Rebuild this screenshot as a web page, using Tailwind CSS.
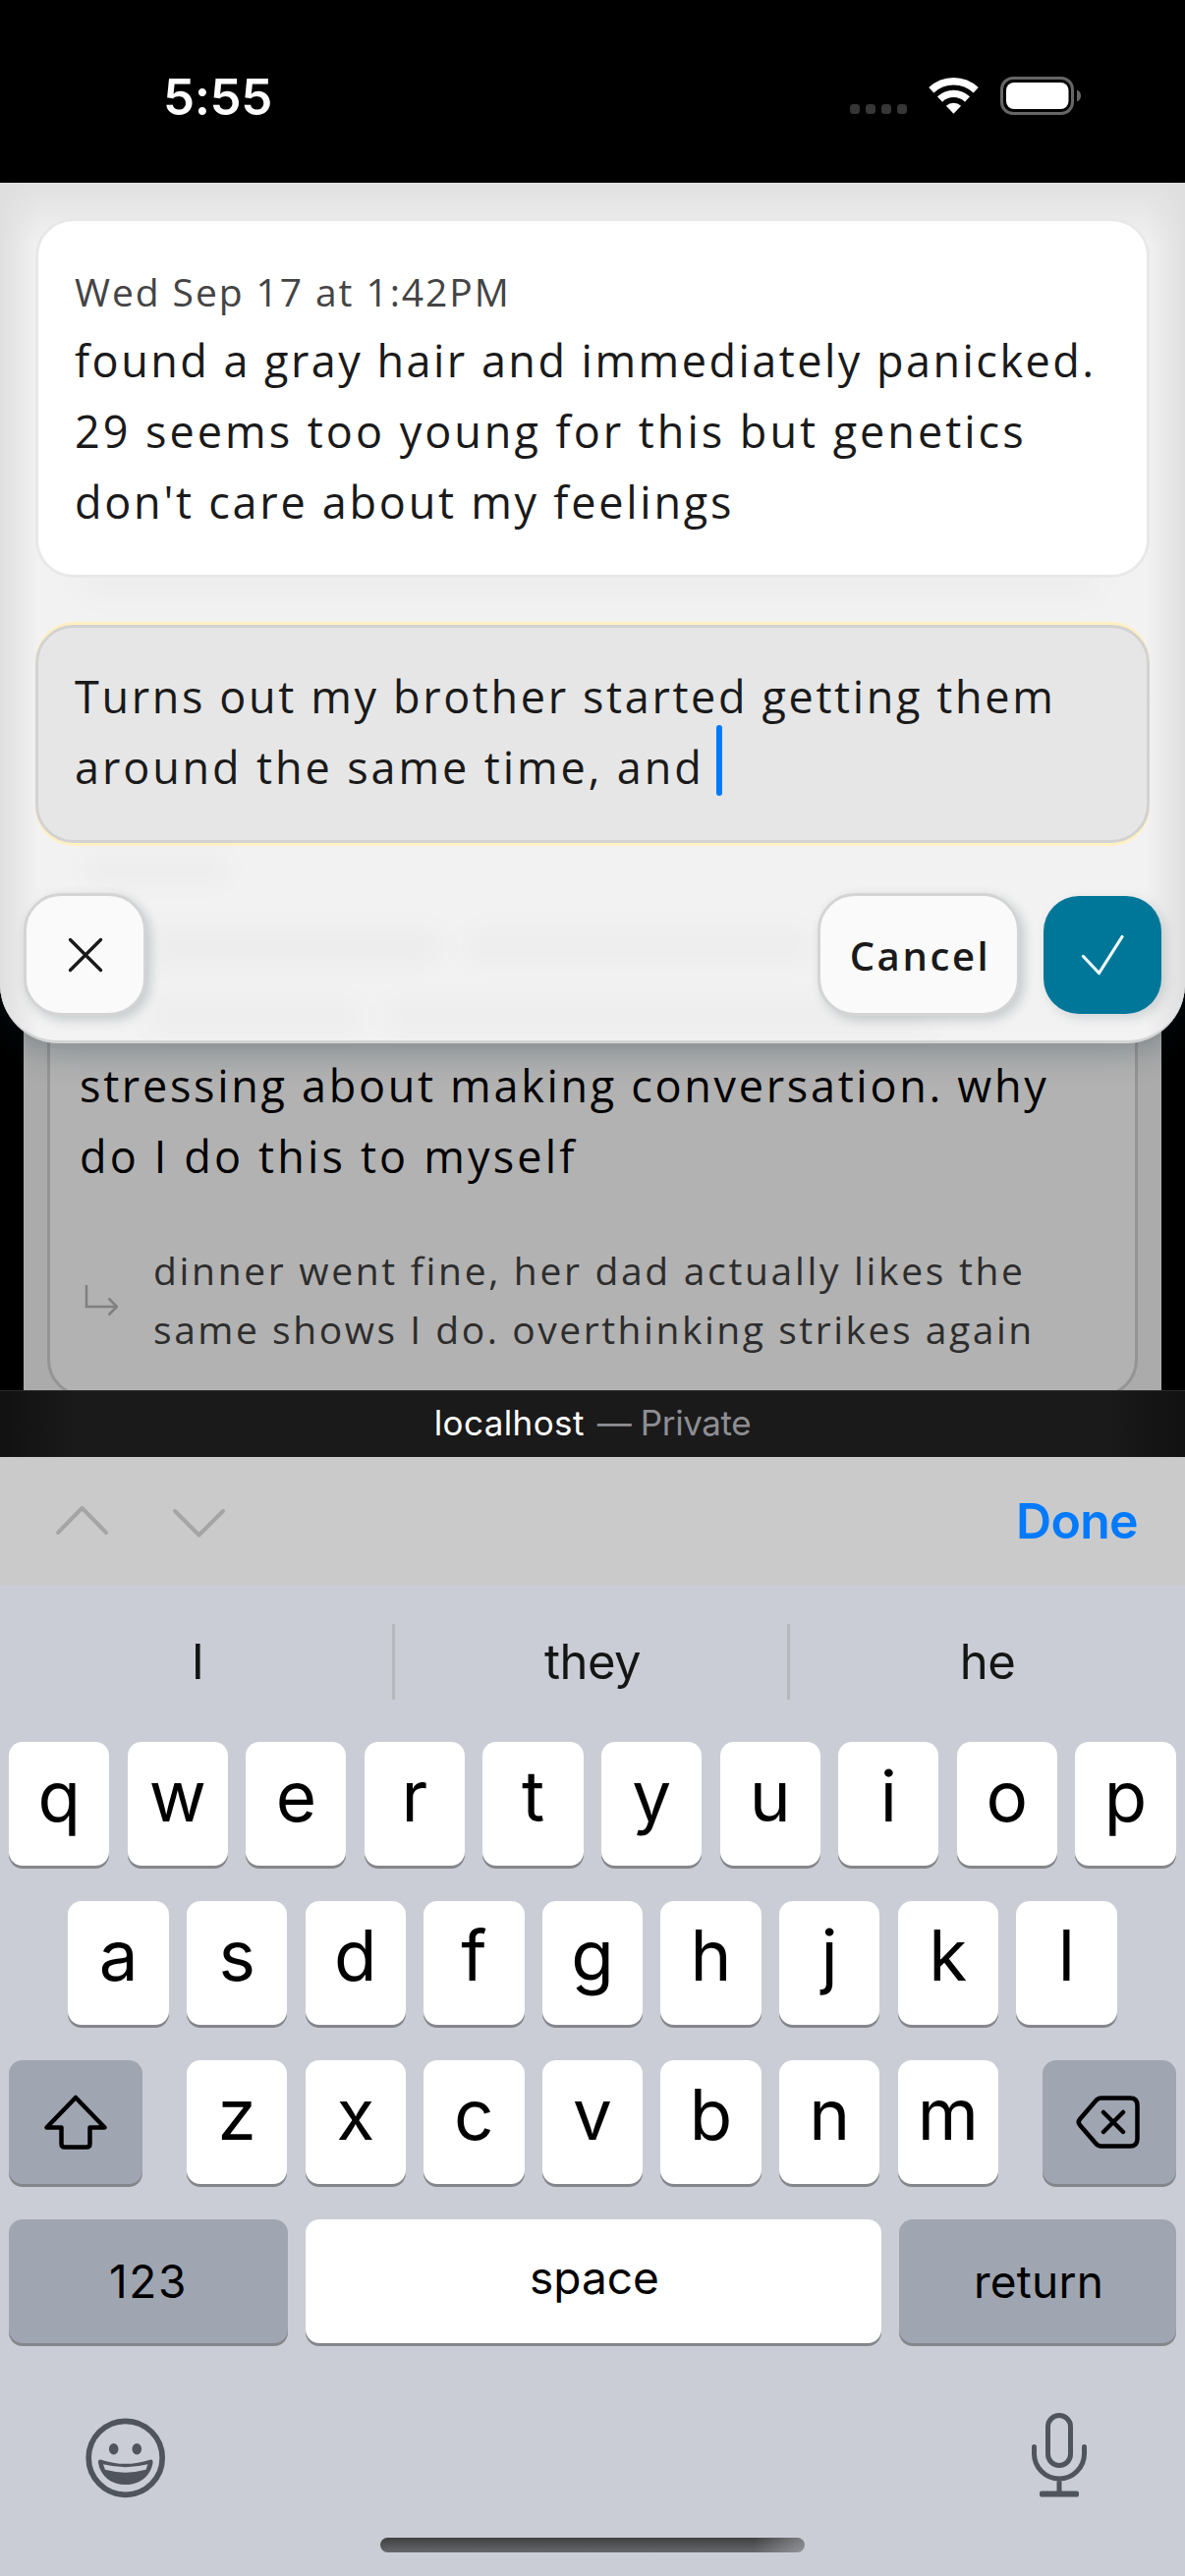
<!DOCTYPE html>
<html lang="en">
<head>
<meta charset="utf-8">
<title>Journal reply</title>
<script src="https://cdn.jsdelivr.net/npm/@tailwindcss/browser@4"></script>
</head>
<body class="w-[1206px] h-[2622px] overflow-hidden bg-black font-['Inter',sans-serif]">
<div class="flex h-[2622px] w-[1206px] flex-col">

  <!-- Status bar -->
  <header class="flex h-[186px] shrink-0 items-start justify-between pl-[166px] pr-[106px] pt-[68px] text-white">
    <div class="h-[62px] text-[51px] font-semibold leading-[62px] tracking-[-0.4px] whitespace-nowrap">5:55</div>
    <div class="flex h-[60px] items-center">
      <svg class="h-[40px] w-[236px]" viewBox="0 0 236 40" fill="none">
        <g fill="#363636"><rect x="1" y="28" width="10" height="10" rx="3.500"/><rect x="17" y="28" width="10" height="10" rx="3.500"/><rect x="33" y="28" width="10" height="10" rx="3.500"/><rect x="49" y="28" width="10" height="10" rx="3.500"/></g>
        <g stroke="#fff" stroke-width="7.400">
          <path d="M83.800 13.800A33 33 0 0 1 129.200 13.800"/>
          <path d="M92.500 23A20.300 20.300 0 0 1 120.500 23"/>
        </g>
        <path d="M106.500 37.700 98.900 29.700A11 11 0 0 1 114.100 29.700z" fill="#fff"/>
        <rect x="155.500" y="1.500" width="72" height="36" rx="11.500" stroke="#666" stroke-width="3"/>
        <rect x="160" y="6" width="63.500" height="27" rx="8" fill="#fff"/>
        <path d="M232 13.500c2.500 1 4 3.300 4 6s-1.500 5-4 6z" fill="#666"/>
      </svg>
    </div>
  </header>

  <!-- Page viewport -->
  <main class="relative h-[1229px] shrink-0 overflow-hidden bg-black font-['Open_Sans',sans-serif]">
    <div class="mx-6 h-full bg-[#ababab] px-6">
      <article class="h-[1236px] rounded-[38px] border-[3px] border-[#949494] bg-[#b2b2b2] pl-[30px] pt-[880px]">
        <p class="text-[45px] leading-[72px] text-black whitespace-nowrap"><span class="tracking-[2.69px]">stressing about making conversation. why</span><br><span class="tracking-[3.15px]">do I do this to myself</span></p>
        <div class="mt-[50px] flex">
          <svg class="mt-[44px] ml-px h-[36px] w-[38px] shrink-0" viewBox="0 0 38 36" fill="none" stroke="#808080" stroke-width="2.600"><path d="M6 1v22h32M28.500 14.500 37 23l-8.500 8.500"/></svg>
          <p class="ml-[36px] text-[39px] leading-[60px] text-[#2d2d2d] whitespace-nowrap"><span class="tracking-[2.68px]">dinner went fine, her dad actually likes the</span><br><span class="tracking-[2.54px]">same shows I do. overthinking strikes again</span></p>
        </div>
      </article>
    </div>

    <!-- Compose sheet -->
    <section class="absolute inset-x-0 top-0 flex h-[876px] flex-col rounded-b-[60px] border-b-[3px] border-[#d4d4d4] bg-[#f2f2f2] bg-[linear-gradient(to_right,#dfdfdf,#f2f2f200_40px,#f2f2f200_1166px,#dfdfdf),linear-gradient(to_bottom,#e0e0e0,#f2f2f200_64px)] shadow-[0_6px_36px_rgba(0,40,52,0.3)]">
      <div class="absolute left-[80px] top-[392px] h-[30px] w-[1040px] rounded-full bg-black/[0.018] blur-[14px]"></div>
      <div class="absolute left-[84px] top-[684px] h-[30px] w-[150px] rounded-full bg-black/[0.018] blur-[12px]"></div>
      <div class="absolute left-[150px] top-[760px] h-[36px] w-[300px] rounded-full bg-black/[0.022] blur-[14px]"></div>
      <div class="absolute left-[470px] top-[760px] h-[36px] w-[360px] rounded-full bg-black/[0.02] blur-[14px]"></div>
      <div class="absolute left-[150px] top-[832px] h-[34px] w-[220px] rounded-full bg-black/[0.02] blur-[14px]"></div>
      <div class="absolute left-[390px] top-[832px] h-[34px] w-[560px] rounded-full bg-black/[0.02] blur-[14px]"></div>

      <article class="relative mx-[36px] mt-[36px] h-[366px] rounded-[39px] border-[3px] border-[#e8e8e8] bg-white px-[37px] pt-[48px]">
        <p class="mb-[10px] text-[39px] leading-[48px] text-[#444] whitespace-nowrap"><span class="tracking-[1.92px]">Wed Sep 17 at 1:42PM</span></p>
        <p class="text-[45px] leading-[72px] text-[#1a1a1a] whitespace-nowrap"><span class="tracking-[2.47px]">found a gray hair and immediately panicked.</span><br><span class="tracking-[2.99px]">29 seems too young for this but genetics</span><br><span class="tracking-[2.74px]">don't care about my feelings</span></p>
      </article>

      <div class="relative mx-[36px] mt-[48px] h-[222px] rounded-[39px] border-[3px] border-[#d2d2d2] bg-[#e6e6e6] px-[37px] pt-[34px] shadow-[0_3px_0_#fff0c2,0_-3px_0_#fff0c2]">
        <p class="text-[45px] leading-[72px] text-[#1a1a1a] whitespace-nowrap"><span class="tracking-[2.63px]">Turns out my brother started getting them</span><br><span class="tracking-[2.89px]">around the same time, and</span></p>
        <i class="absolute left-[690px] top-[99px] h-[72px] w-[6px] rounded-full bg-[#007aff]"></i>
      </div>

      <div class="relative mt-[51px] flex items-center px-[24px]">
        <button class="flex size-[125px] items-center justify-center rounded-[38px] border-[3px] border-[#d4d4d4] bg-[#fafafa] shadow-[4px_4px_12px_rgba(0,40,52,0.2)]">
          <svg class="size-[36px]" viewBox="0 0 36 36" fill="none" stroke="#1a1a1a" stroke-width="3.400" stroke-linecap="round"><path d="M2.500 2.500l31 31M33.500 2.500l-31 31"/></svg>
        </button>
        <button class="ml-auto flex h-[125px] w-[206px] items-center justify-center rounded-[38px] border-[3px] border-[#d4d4d4] bg-[#fafafa] pl-[3px] pt-[2px] text-[40px] font-semibold tracking-[2.6px] text-[#1a1a1a] shadow-[4px_4px_12px_rgba(0,40,52,0.2)]">Cancel</button>
        <button class="ml-[24px] flex size-[120px] items-center justify-center rounded-[36px] bg-[#007799] shadow-[4px_4px_12px_rgba(0,40,52,0.15)]">
          <svg class="h-[42px] w-[44px]" viewBox="0 0 44 42" fill="none" stroke="#f0fcff" stroke-width="3.200" stroke-linecap="round" stroke-linejoin="round"><path d="M2.500 22.500l16 17L42 2.500"/></svg>
        </button>
      </div>
    </section>
  </main>

  <!-- Address bar -->
  <div class="flex h-[68px] shrink-0 items-center justify-center gap-[13px] border-t border-[#2a2a2a] bg-[linear-gradient(to_right,#111,#1a1a1a_80px,#1a1a1a_1126px,#111)] pb-[3px] text-[35px] whitespace-nowrap">
    <span class="tracking-[0.4px] text-white">localhost</span><span class="tracking-[-0.4px] text-[#8e8e93]">— Private</span>
  </div>

  <!-- Form accessory bar -->
  <div class="flex h-[131px] shrink-0 items-center bg-[#cacaca] pl-[55px] pr-[48px]">
    <svg class="h-[34px] w-[176px]" viewBox="0 0 176 34" fill="none" stroke="#a5a5a5" stroke-width="4" stroke-linecap="round" stroke-linejoin="round"><path d="M4 28 28.500 3 53 28M123 6l24.500 24.500L172 6"/></svg>
    <span class="ml-auto text-[50px] font-semibold tracking-[-0.7px] text-[#007aff]">Done</span>
  </div>

  <!-- Keyboard -->
  <div class="flex grow flex-col bg-[#cbcdd6] px-[9px] text-black">
    <div class="-mx-[9px] mt-[39px] grid h-[75px] grid-cols-3 divide-x-[3px] divide-[#b6b8bb] text-center text-[49px] leading-[77px] tracking-[-0.6px] text-[#151515]">
      <span class="pl-[3px]">I</span><span class="pl-[3px]">they</span><span>he</span>
    </div>

    <div class="mt-[45px] flex flex-col gap-[36px] text-center text-[71px] font-normal leading-[110px]">
      <div class="flex gap-[18.300px]">
        <kbd class="h-[126px] w-[102.300px] rounded-[14px] bg-white font-[Inter] shadow-[0_3px_0_#85868b]">q</kbd>
        <kbd class="h-[126px] w-[102.300px] rounded-[14px] bg-white font-[Inter] shadow-[0_3px_0_#85868b]">w</kbd>
        <kbd class="h-[126px] w-[102.300px] rounded-[14px] bg-white font-[Inter] shadow-[0_3px_0_#85868b]">e</kbd>
        <kbd class="h-[126px] w-[102.300px] rounded-[14px] bg-white font-[Inter] shadow-[0_3px_0_#85868b]">r</kbd>
        <kbd class="h-[126px] w-[102.300px] rounded-[14px] bg-white font-[Inter] shadow-[0_3px_0_#85868b]">t</kbd>
        <kbd class="h-[126px] w-[102.300px] rounded-[14px] bg-white font-[Inter] shadow-[0_3px_0_#85868b]">y</kbd>
        <kbd class="h-[126px] w-[102.300px] rounded-[14px] bg-white font-[Inter] shadow-[0_3px_0_#85868b]">u</kbd>
        <kbd class="h-[126px] w-[102.300px] rounded-[14px] bg-white font-[Inter] shadow-[0_3px_0_#85868b]">i</kbd>
        <kbd class="h-[126px] w-[102.300px] rounded-[14px] bg-white font-[Inter] shadow-[0_3px_0_#85868b]">o</kbd>
        <kbd class="h-[126px] w-[102.300px] rounded-[14px] bg-white font-[Inter] shadow-[0_3px_0_#85868b]">p</kbd>
      </div>
      <div class="flex justify-center gap-[18.300px]">
        <kbd class="h-[126px] w-[102.300px] rounded-[14px] bg-white font-[Inter] shadow-[0_3px_0_#85868b]">a</kbd>
        <kbd class="h-[126px] w-[102.300px] rounded-[14px] bg-white font-[Inter] shadow-[0_3px_0_#85868b]">s</kbd>
        <kbd class="h-[126px] w-[102.300px] rounded-[14px] bg-white font-[Inter] shadow-[0_3px_0_#85868b]">d</kbd>
        <kbd class="h-[126px] w-[102.300px] rounded-[14px] bg-white font-[Inter] shadow-[0_3px_0_#85868b]">f</kbd>
        <kbd class="h-[126px] w-[102.300px] rounded-[14px] bg-white font-[Inter] shadow-[0_3px_0_#85868b]">g</kbd>
        <kbd class="h-[126px] w-[102.300px] rounded-[14px] bg-white font-[Inter] shadow-[0_3px_0_#85868b]">h</kbd>
        <kbd class="h-[126px] w-[102.300px] rounded-[14px] bg-white font-[Inter] shadow-[0_3px_0_#85868b]">j</kbd>
        <kbd class="h-[126px] w-[102.300px] rounded-[14px] bg-white font-[Inter] shadow-[0_3px_0_#85868b]">k</kbd>
        <kbd class="h-[126px] w-[102.300px] rounded-[14px] bg-white font-[Inter] shadow-[0_3px_0_#85868b]">l</kbd>
      </div>
      <div class="flex justify-between">
        <kbd class="flex h-[126px] w-[136px] items-center justify-center rounded-[14px] bg-[#9fa5b1] shadow-[0_3px_0_#85868b]">
          <svg class="h-[56px] w-[64px]" viewBox="0 0 64 56" fill="none" stroke="#000" stroke-width="4.500" stroke-linejoin="round"><path d="M32 3 61.500 33.500H46.500V50q0 3.500-3.500 3.500H21q-3.500 0-3.500-3.500V33.500H2.500z"/></svg>
        </kbd>
        <div class="flex gap-[18.300px]">
          <kbd class="h-[126px] w-[102.300px] rounded-[14px] bg-white font-[Inter] shadow-[0_3px_0_#85868b]">z</kbd>
          <kbd class="h-[126px] w-[102.300px] rounded-[14px] bg-white font-[Inter] shadow-[0_3px_0_#85868b]">x</kbd>
          <kbd class="h-[126px] w-[102.300px] rounded-[14px] bg-white font-[Inter] shadow-[0_3px_0_#85868b]">c</kbd>
          <kbd class="h-[126px] w-[102.300px] rounded-[14px] bg-white font-[Inter] shadow-[0_3px_0_#85868b]">v</kbd>
          <kbd class="h-[126px] w-[102.300px] rounded-[14px] bg-white font-[Inter] shadow-[0_3px_0_#85868b]">b</kbd>
          <kbd class="h-[126px] w-[102.300px] rounded-[14px] bg-white font-[Inter] shadow-[0_3px_0_#85868b]">n</kbd>
          <kbd class="h-[126px] w-[102.300px] rounded-[14px] bg-white font-[Inter] shadow-[0_3px_0_#85868b]">m</kbd>
        </div>
        <kbd class="flex h-[126px] w-[136px] items-center justify-center rounded-[14px] bg-[#9fa5b1] pr-[3px] shadow-[0_3px_0_#85868b]">
          <svg class="h-[54px] w-[65px]" viewBox="0 0 65 54" fill="none" stroke="#000" stroke-width="4.500" stroke-linejoin="round" stroke-linecap="round"><path d="M26 2.500H55q7.500 0 7.500 7.500V44q0 7.500-7.500 7.500H26q-3.500 0-6-3L4 30q-2.500-3 0-6L20 5.500q2.500-3 6-3zM28 17 48 37M48 17 28 37"/></svg>
        </kbd>
      </div>
      <div class="flex gap-[18px] text-[46px] leading-[127px]">
        <kbd class="h-[126px] w-[284px] rounded-[14px] bg-[#9fa5b1] font-[Inter] tracking-[1.6px] shadow-[0_3px_0_#85868b]">123</kbd>
        <kbd class="h-[126px] grow rounded-[14px] bg-white pl-[2px] font-[Inter] leading-[119px] shadow-[0_3px_0_#85868b]">space</kbd>
        <kbd class="h-[126px] w-[282px] rounded-[14px] bg-[#9fa5b1] pl-[2px] font-[Inter] tracking-[0.2px] shadow-[0_3px_0_#85868b]">return</kbd>
      </div>
    </div>

    <div class="mt-[71px] flex h-[86px] items-start justify-between pl-[78px] pr-[91px]">
      <svg class="mt-[5px] h-[82px] w-[82px]" viewBox="0 0 82 82" fill="#50545c">
        <circle cx="40.700" cy="40.800" r="37.500" fill="none" stroke="#50545c" stroke-width="5.700"/>
        <ellipse cx="28.700" cy="31.700" rx="4.800" ry="5.700"/><ellipse cx="52.300" cy="31.700" rx="4.800" ry="5.700"/>
        <path d="M16 42.700Q40.700 51 65.500 42.700 69 42 68.500 46C66 60 55 68 40.700 68S15.500 60 13 46Q12.500 42 16 42.700z"/>
        <path d="M18 47.300Q40.700 53 63.500 47.300L61.500 52.800Q40.700 58.500 20 52.800z" fill="#cbcdd6"/>
      </svg>
      <svg class="h-[86px] w-[56px]" viewBox="0 0 56 86" fill="none" stroke="#50545c" stroke-width="5" stroke-linecap="round">
        <rect x="16.500" y="2.500" width="23" height="51" rx="11.500"/>
        <path d="M2.500 34.500v7a25.500 25.500 0 0 0 51 0v-7M28 67v13"/>
        <rect x="8" y="79.500" width="40" height="6" rx="2" fill="#50545c" stroke="none"/>
      </svg>
    </div>
    <div class="mx-auto mt-[41px] h-[15px] w-[432px] rounded-full bg-[linear-gradient(to_right,#cbcdd600_88%,#cbcdd670),linear-gradient(to_bottom,#3e4042,#66676a)]"></div>
  </div>
</div>
</body>
</html>
